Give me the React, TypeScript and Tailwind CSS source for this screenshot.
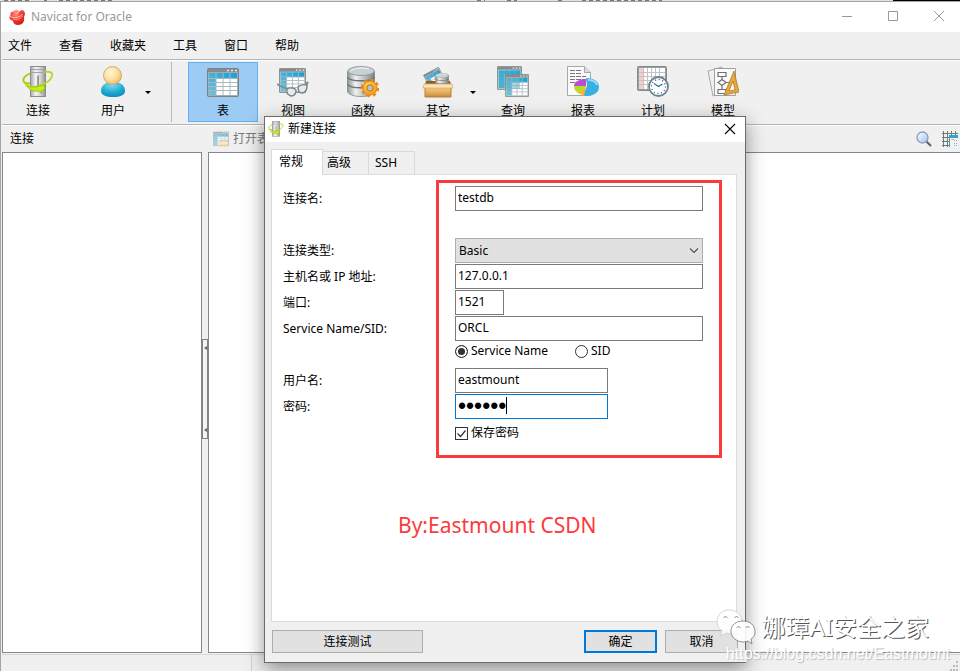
import React, { useState } from "react";
import type { ReactNode } from "react";

const Gradients = () => (
  <svg width="0" height="0" className="absolute" aria-hidden="true">
    <defs>
      <linearGradient id="metal" x1="0" x2="1" y1="0" y2="0">
        <stop offset="0" stopColor="#a5a5a5" />
        <stop offset=".35" stopColor="#f6f6f6" />
        <stop offset=".7" stopColor="#cfcfcf" />
        <stop offset="1" stopColor="#909090" />
      </linearGradient>
      <linearGradient id="drum" x1="0" x2="1" y1="0" y2="0">
        <stop offset="0" stopColor="#8f9799" />
        <stop offset=".3" stopColor="#eef2f2" />
        <stop offset=".65" stopColor="#b5bcbd" />
        <stop offset="1" stopColor="#7a8183" />
      </linearGradient>
      <linearGradient id="blue" x1="0" x2="1" y1="1" y2="0">
        <stop offset="0" stopColor="#6cc5dd" />
        <stop offset="1" stopColor="#129fd6" />
      </linearGradient>
      <radialGradient id="head" cx=".4" cy=".35" r=".7">
        <stop offset="0" stopColor="#fff6dc" />
        <stop offset=".6" stopColor="#fbdc9a" />
        <stop offset="1" stopColor="#eab45a" />
      </radialGradient>
      <radialGradient id="body" cx=".45" cy=".2" r=".9">
        <stop offset="0" stopColor="#7fdcf2" />
        <stop offset=".6" stopColor="#1aa6d0" />
        <stop offset="1" stopColor="#0b86b0" />
      </radialGradient>
      <linearGradient id="box" x1="0" x2="0" y1="0" y2="1">
        <stop offset="0" stopColor="#f9dfa9" />
        <stop offset=".6" stopColor="#e8b364" />
        <stop offset="1" stopColor="#c88a38" />
      </linearGradient>
      <radialGradient id="gear" cx=".4" cy=".35" r=".7">
        <stop offset="0" stopColor="#ffd94d" />
        <stop offset="1" stopColor="#f5951a" />
      </radialGradient>
      <radialGradient id="red" cx=".4" cy=".3" r=".8">
        <stop offset="0" stopColor="#ff8a7a" />
        <stop offset=".5" stopColor="#f3352a" />
        <stop offset="1" stopColor="#c01212" />
      </radialGradient>
      <linearGradient id="glass" x1="0" x2="1" y1="0" y2="1">
        <stop offset="0" stopColor="#ffffff" />
        <stop offset="1" stopColor="#9cc3f2" />
      </linearGradient>
    </defs>
  </svg>
);

const Logo = () => (
  <svg width="17" height="17" viewBox="0 0 17 17" aria-hidden="true">
    <path d="M1.500 6C1 3 3 2 5 3l3 2 3-3c2-1 5 0 5 3 0 1-1 2-1 3 1 5-2 8-6 8-3 0-5-2-5-4-2-1-4-2-3.500-4z" fill="url(#red)" />
    <path d="M4 2.500c2-2 5-2 6 0-1 2-3 2.500-5 1.500z" fill="#f88" />
    <path d="M11 2c2-1.500 4-1 4.500 1-1 1.500-3 1.500-4.500.5z" fill="#e9493e" />
    <path d="M1 7c2 3 9 2 13-2" stroke="#fff" strokeOpacity=".7" strokeWidth=".9" fill="none" />
    <path d="M4 10c3 1.500 7 0 10-3" stroke="#fff" strokeOpacity=".5" strokeWidth=".8" fill="none" />
  </svg>
);

const Server = ({ size = 32 }: { size?: number }) => (
  <svg width={size} height={size} viewBox="0 0 32 32" aria-hidden="true">
    <path d="M9 7C3 9 0 13 2 16c2 2 9 2 16 0" fill="none" stroke="#a5cc10" strokeWidth="1.800" />
    <rect x="8.500" y=".5" width="15" height="30" fill="url(#metal)" stroke="#8d8d8d" />
    <path d="M9 3.500h14M9 6.500h14" stroke="#a5a5a5" />
    <path d="M16 9.500v14" stroke="#555" />
    <path d="M23 6c6-1 8 1 7 4-1 4-7 8-14 10-6 2-11 1-13-3" fill="none" stroke="#b4dc18" strokeWidth="1.800" />
    <path d="M5 20c4 2 11 1 17-1l1 4-4 2 1 3-3-3c-5 1-10-1-12-5z" fill="#c4ee1a" stroke="#93b50c" strokeWidth=".7" />
  </svg>
);

const User = () => (
  <svg width="32" height="32" viewBox="0 0 32 32" aria-hidden="true">
    <path d="M4 25c0-6 5-9 12-9s12 3 12 9c0 4-5 6-12 6S4 29 4 25z" fill="url(#body)" />
    <circle cx="15.500" cy="9.500" r="9" fill="url(#head)" stroke="#c9a05a" strokeWidth=".8" />
  </svg>
);

const Grid = ({ x = 0, y = 0, w = 32, h = 29 }: { x?: number; y?: number; w?: number; h?: number }) => (
  <svg x={x} y={y} width={w} height={h} viewBox="0 0 32 29" preserveAspectRatio="none">
    <rect x=".5" y=".5" width="31" height="28" rx="1" fill="#a7adaf" stroke="#7d8385" />
    <path d="M1 1h30v3H1z" fill="#868c8e" />
    <path d="M20 2.500h2M24 2.500h2M28 2.500h2" stroke="#e9e9e9" strokeWidth="1.500" />
    <path d="M2 5h28v22H2z" fill="#fff" />
    <path d="M2 5h28v5.500H9V27H2z" fill="url(#blue)" />
    <path d="M2 10.500h28M2 14.500h28M2 18.500h28M2 22.500h28M9 5v22M16 5v22M23 5v22" stroke="#a9b9bd" strokeWidth="1" />
  </svg>
);

const TableIcon = () => (
  <svg width="32" height="32" viewBox="0 0 32 32" aria-hidden="true"><Grid y={2} /></svg>
);

const ViewIcon = () => (
  <svg width="32" height="32" viewBox="0 0 32 32" aria-hidden="true">
    <Grid x={2} y={2} w={27} h={25} />
    <path d="M0 18l3 2 8 3M31 16l-4 6" stroke="#858b8d" fill="none" strokeWidth="1.600" />
    <path d="M10 23c3-2 8-1 9 1 0 4-2 6-5 6-3-1-5-3-4-7zM21 21c2-2 6-3 9-2 0 5-2 8-5 8-3 0-4-2-4-6z" fill="#e3eced" stroke="#7d8385" strokeWidth="1.400" />
    <path d="M30 20l1-4-3 1" fill="none" stroke="#858b8d" />
  </svg>
);

const Drum = ({ x = 0, y = 0, w = 28, h = 31 }: { x?: number; y?: number; w?: number; h?: number }) => (
  <svg x={x} y={y} width={w} height={h} viewBox="0 0 28 31" preserveAspectRatio="none">
    <path d="M.5 5v20c0 3 6 5.500 13.500 5.500S27.500 28 27.500 25V5z" fill="url(#drum)" stroke="#7d8587" strokeWidth=".8" />
    <path d="M.5 11c2 5 25 5 27 0M.5 18c2 5 25 5 27 0" fill="none" stroke="#697173" strokeWidth="1.300" />
    <ellipse cx="14" cy="5" rx="13.300" ry="4.500" fill="#c9d0d1" stroke="#899193" strokeWidth=".8" />
    <path d="M4 5c3-3 12-4 18-2" stroke="#f4f6f6" fill="none" />
  </svg>
);

const FunctionIcon = () => (
  <svg width="32" height="32" viewBox="0 0 32 32" aria-hidden="true">
    <Drum />
    <circle cx="23" cy="22" r="7.800" fill="none" stroke="#ef8b12" strokeWidth="3" strokeDasharray="3.100 3.030" />
    <circle cx="23" cy="22" r="7" fill="url(#gear)" stroke="#ec8510" />
    <circle cx="23" cy="22" r="3.200" fill="#b5c2c6" stroke="#c76d0b" />
  </svg>
);

const OtherIcon = () => (
  <svg width="32" height="32" viewBox="0 0 32 32" aria-hidden="true">
    <g transform="rotate(-28 12 11)"><Grid x={3} y={4} w={18} h={18} /></g>
    <path d="M4 15h24l1 4H3z" fill="#8d5d22" />
    <Drum x={13} y={7} w={14} h={16} />
    <path d="M3 18h26v13H3z" fill="url(#box)" stroke="#b9803a" />
    <path d="M2 18h28l1 4H1z" fill="#fbe5b6" stroke="#cf9e55" strokeWidth=".6" />
  </svg>
);

const QueryIcon = () => (
  <svg width="32" height="32" viewBox="0 0 32 32" aria-hidden="true">
    <Grid w={25} h={24} />
    <path d="M2 5h21v17H2z" fill="#2fa9d4" fillOpacity=".6" />
    <Grid x={8} y={8} w={24} h={23} />
    <path d="M9 12h14v11H9z" fill="#6ab0ca" fillOpacity=".55" />
  </svg>
);

const ReportIcon = () => (
  <svg width="32" height="32" viewBox="0 0 32 32" aria-hidden="true">
    <path d="M.5.500h17l6 6v23H.5z" fill="#fafafa" stroke="#a7a7a7" />
    <path d="M17.500.500v6h6" fill="#ddd" stroke="#a7a7a7" />
    <path d="M3 4.500h12M3 7.500h11M3 10.500h16M3 13.500h15M3 16.500h8" stroke="#777" strokeDasharray="5 1" />
    <path d="M7 20c0-4 5-7 12-7v8H7z" fill="#bb4fd3" />
    <path d="M19 12c7 0 13 3 13 9s-6 9-13 9l-3-1 4-9z" fill="#38b0e6" />
    <path d="M7 20h12l-6 8c-4-2-6-4-6-8z" fill="#b8dc25" />
    <path d="M19 20l-2 10-5-3z" fill="#f6b72c" />
    <path d="M21 14c5 0 8 2 9 5" stroke="#9adcf7" strokeWidth="2" fill="none" />
  </svg>
);

const ScheduleIcon = () => (
  <svg width="32" height="32" viewBox="0 0 32 32" aria-hidden="true">
    <rect x=".5" y=".5" width="29" height="24" rx="1" fill="#999fa1" stroke="#848a8c" />
    <path d="M2 2h26v21H2z" fill="#fff" />
    <path d="M2 2h4v21H2z" fill="#f9cccc" />
    <path d="M6.500 2v21M10.500 2v21M14.500 2v21M18.500 2v21M22.500 2v21M2 6.500h26M2 10.500h26M2 14.500h26M2 18.500h26" stroke="#c2c2c2" />
    <circle cx="21.500" cy="20.500" r="9.500" fill="#fff" stroke="#6d8090" strokeWidth="1.800" />
    <circle cx="21.500" cy="20.500" r="7" fill="none" stroke="#2b4f75" strokeWidth="1.300" strokeDasharray="1 2.665" />
    <path d="M17 17.500l4.500 3 4-2.500" fill="none" stroke="#2676a0" strokeWidth="1.300" />
  </svg>
);

const ModelIcon = () => (
  <svg width="32" height="32" viewBox="0 0 32 32" aria-hidden="true">
    <path d="M1 5l14-4 5 25-14 4z" fill="#efefef" stroke="#aaa" />
    <path d="M7.500 2.500h21v27h-21z" fill="#fafafa" stroke="#a0a0a0" />
    <path d="M11 6.500h8v4h-8zM11 23.500h8v4h-8zM15 11v3M15 19v4M19 16.500h3M15 13.500l4 3-4 3-4-3z" fill="none" stroke="#707070" strokeWidth="1.200" />
    <path d="M27 5l5 21-15 3zM26 15l-4 10 6-1z" fill="#e6a93d" fillRule="evenodd" stroke="#a87018" strokeWidth=".7" />
  </svg>
);

const OpenTableIcon = () => (
  <svg width="16" height="16" viewBox="0 0 32 32" className="opacity-60" aria-hidden="true">
    <Grid y={1} />
    <path d="M14 19h16v11H14z" fill="#f5cf7f" stroke="#c3944a" />
    <path d="M14 24h16" stroke="#fff" strokeWidth="2" />
  </svg>
);

function Tool({ label, icon, active = false, arrow = false }: { label: string; icon: ReactNode; active?: boolean; arrow?: boolean }) {
  return (
    <button
      type="button"
      className={`relative flex h-15 shrink-0 flex-col items-center border pt-[3px] ${arrow ? "w-20" : "w-[70px]"} ${
        active ? "border-[#62b0f6] bg-[#9ccbf4]" : "border-transparent"
      }`}
    >
      {icon}
      <span className="mt-1 leading-[18px]">{label}</span>
      {arrow && <span className="absolute top-[28px] right-px border-x-3 border-t-3 border-x-transparent border-t-black" />}
    </button>
  );
}

const field = "h-[25px] border border-[#7a7a7a] bg-white px-0.5 pb-0.5 outline-none";

function Row({ id, label, children }: { id: string; label: string; children: ReactNode }) {
  return (
    <div className="flex h-[26px]">
      <label htmlFor={id} className="w-[172px] shrink-0 leading-[25px]">{label}</label>
      <div className="relative">{children}</div>
    </div>
  );
}

function Dialog() {
  const [mode, setMode] = useState("name");
  const tab = "border border-b-0 border-[#d9d9d9] text-left";
  const button = "h-[23px] border border-[#adadad] bg-[#e1e1e1]";
  return (
    <section
      aria-label="新建连接"
      className="absolute top-[116px] left-[264px] flex h-[547px] w-[482px] flex-col border border-[#6b6b6b] bg-[#f0f0f0] shadow-[0_6px_18px_rgba(0,0,0,0.42)]"
    >
      <header className="flex h-[25px] shrink-0 items-center bg-white pr-[9px] pb-px pl-[3px]">
        <Server size={16} />
        <h2 className="ml-1 flex-1">新建连接</h2>
        <button type="button" aria-label="关闭">
          <svg width="12" height="12" viewBox="0 0 12 12" aria-hidden="true">
            <path d="M1 1l10 10M11 1L1 11" stroke="#000" strokeWidth="1.100" />
          </svg>
        </button>
      </header>

      <div className="flex flex-1 flex-col px-1.5 pt-[7px]">
        <div role="tablist" className="relative z-10 flex items-end">
          <button type="button" role="tab" aria-selected="true" className={`${tab} -mb-px h-[26px] w-13 bg-white pb-0.5 pl-[7px]`}>常规</button>
          <button type="button" role="tab" aria-selected="false" className={`${tab} h-[23px] w-[46px] border-l-0 pl-1`}>高级</button>
          <button type="button" role="tab" aria-selected="false" className={`${tab} h-[23px] w-[46px] border-l-0 pl-1.5`}>SSH</button>
        </div>

        <div role="tabpanel" className="relative mr-0.5 h-[448px] border border-[#dcdcdc] bg-white pt-[11px] pl-[11px]">
          <Row id="conn" label="连接名:">
            <input id="conn" defaultValue="testdb" className={`${field} w-[248px]`} />
          </Row>
          <div className="h-[26px]" />
          <Row id="type" label="连接类型:">
            <select id="type" className="h-[25px] w-[248px] appearance-none border border-[#adadad] bg-[#e1e1e1] px-[3px] outline-none">
              <option>Basic</option>
            </select>
            <svg width="10" height="6" viewBox="0 0 10 6" className="pointer-events-none absolute top-[10px] right-1" aria-hidden="true">
              <path d="M1 .5l4 4 4-4" fill="none" stroke="#555" strokeWidth="1.200" />
            </svg>
          </Row>
          <Row id="host" label="主机名或 IP 地址:">
            <input id="host" defaultValue="127.0.0.1" className={`${field} w-[248px]`} />
          </Row>
          <Row id="port" label="端口:">
            <input id="port" defaultValue="1521" className={`${field} w-[49px]`} />
          </Row>
          <Row id="service" label="Service Name/SID:">
            <input id="service" defaultValue="ORCL" className={`${field} w-[248px]`} />
          </Row>
          <div className="flex h-[26px] gap-[27px] pb-2 pl-[172px]">
            {[["name", "Service Name"], ["sid", "SID"]].map(([value, text]) => (
              <label key={value} className="flex items-center gap-[3px]">
                <input
                  type="radio"
                  name="mode"
                  checked={mode === value}
                  onChange={() => setMode(value)}
                  className="size-[13px] appearance-none rounded-full border border-[#333] bg-white checked:bg-[#333] checked:shadow-[inset_0_0_0_2px_white]"
                />
                {text}
              </label>
            ))}
          </div>
          <Row id="user" label="用户名:">
            <input id="user" defaultValue="eastmount" className={`${field} w-[153px]`} />
          </Row>
          <Row id="password" label="密码:">
            <input id="password" type="password" defaultValue="orcl11" className="h-[25px] w-[153px] border border-[#0078d7] bg-white px-0.5 font-['Liberation_Sans',sans-serif] text-[23px] outline-none" />
            <span className="absolute top-[3px] left-[51px] h-[17px] w-px bg-black" />
          </Row>
          <label className="ml-[172px] flex h-[26px] w-fit items-center gap-[3px]">
            <span className="relative flex">
              <input type="checkbox" defaultChecked className="peer size-[13px] appearance-none border border-[#333] bg-white" />
              <svg width="13" height="13" viewBox="0 0 13 13" className="pointer-events-none absolute hidden peer-checked:block" aria-hidden="true">
                <path d="M2.500 6.500l3 3 5-6" fill="none" stroke="#333" strokeWidth="1.200" />
              </svg>
            </span>
            保存密码
          </label>
          <div className="pointer-events-none absolute top-[5px] left-[164px] h-[278px] w-[286px] border-3 border-[#fb3b3b]" />
          <p className="pointer-events-none absolute top-[335px] left-[126px] text-[21px] leading-[30px] whitespace-nowrap text-[#fb3b3b]">By:Eastmount CSDN</p>
        </div>

        <footer className="flex gap-2 pt-2 pr-px pl-px">
          <button type="button" className={`${button} w-[151px]`}>连接测试</button>
          <span className="flex-1" />
          <button type="button" className="h-[23px] w-[73px] border-2 border-[#0078d7] bg-[#e1e1e1]">确定</button>
          <button type="button" className={`${button} w-[73px]`}>取消</button>
        </footer>
      </div>
    </section>
  );
}

function Watermark() {
  return (
    <div className="pointer-events-none absolute right-2.5 bottom-2 text-right text-white">
      <div className="flex items-center justify-end gap-1.5 pr-[21px]">
        <svg width="40" height="36" viewBox="0 0 40 36" aria-hidden="true">
          <path d="M13 1C6 1 1 6 1 13c0 4 2 7 5 9l-1 5 5-3c9 2 16-3 16-11S20 1 13 1z" fill="#fff" fillOpacity=".9" stroke="#c4c4c4" strokeWidth=".7" />
          <path d="M27 12c-7 0-12 4-12 10s5 11 13 11l4-1 4 3-1-5c3-2 4-4 4-7 0-7-5-11-12-11z" fill="#fff" fillOpacity=".9" stroke="#777" strokeWidth=".8" />
          <path d="M8 9c0-2 3-2 3 0M19 9c0-2 3-2 3 0M21 19c0-2 3-2 3 0M30 19c0-2 3-2 3 0" fill="none" stroke="#888" />
        </svg>
        <span className="text-[24px] leading-9 [text-shadow:1px_1px_0_#555]">娜璋AI安全之家</span>
      </div>
      <div className="font-['Liberation_Sans',sans-serif] text-[16px] leading-[18px] [text-shadow:1px_1px_1px_#bbb]">https://blog.csdn.net/Eastmount</div>
    </div>
  );
}

export default function App() {
  return (
    <div className="relative flex h-screen flex-col overflow-hidden bg-[#f0f0f0] font-['Noto_Sans','Noto_Sans_CJK_SC',sans-serif] text-[12px] text-black">
      <Gradients />
      <div className="flex h-px shrink-0 bg-[#e3e3e3]">
        <svg width="664" height="1" viewBox="0 0 664 1" aria-hidden="true">
          <path d="M4 .5h28M44 .5h3M59 .5h53M477 .5h8M507 .5h10M558 .5h6M582 .5h80" stroke="#777" strokeDasharray="4 3" />
        </svg>
        <span className="ml-auto w-[67px] bg-black" />
      </div>
      <div className="flex min-h-0 flex-1 flex-col border-t border-l border-[#a3a3a3] pl-px">
        <header className="-ml-px flex h-[30px] shrink-0 items-center bg-white pl-2 text-[#999]">
          <Logo />
          <h1 className="ml-[5px] flex-1">Navicat for Oracle</h1>
          <div className="flex gap-[34px] pr-[15px]">
            <button type="button" aria-label="最小化">
              <svg width="12" height="12" viewBox="0 0 12 12" aria-hidden="true"><path d="M1 5.500h10" stroke="#999" /></svg>
            </button>
            <button type="button" aria-label="最大化">
              <svg width="12" height="12" viewBox="0 0 12 12" aria-hidden="true"><path d="M1.500.500h9v9h-9z" fill="none" stroke="#999" /></svg>
            </button>
            <button type="button" aria-label="关闭">
              <svg width="12" height="12" viewBox="0 0 12 12" aria-hidden="true"><path d="M1 0l10 10M11 0L1 10" stroke="#999" /></svg>
            </button>
          </div>
        </header>

        <nav className="flex h-7 shrink-0 gap-[27px] border-b border-[#b5b5b5] pl-1.5">
          {["文件", "查看", "收藏夹", "工具", "窗口", "帮助"].map((m) => (
            <button key={m} type="button">{m}</button>
          ))}
        </nav>

        <div className="flex h-[65px] shrink-0 border-t border-b border-t-white border-b-[#b5b5b5] pt-px pl-px">
          <Tool label="连接" icon={<Server />} />
          <Tool label="用户" icon={<User />} arrow />
          <div className="mr-4 ml-[18px] h-15 w-px bg-[#b9b9b9]" />
          <Tool label="表" icon={<TableIcon />} active />
          <Tool label="视图" icon={<ViewIcon />} />
          <Tool label="函数" icon={<FunctionIcon />} />
          <Tool label="其它" icon={<OtherIcon />} arrow />
          <Tool label="查询" icon={<QueryIcon />} />
          <Tool label="报表" icon={<ReportIcon />} />
          <Tool label="计划" icon={<ScheduleIcon />} />
          <Tool label="模型" icon={<ModelIcon />} />
        </div>

        <div className="flex h-[27px] shrink-0 items-center border-t border-white">
          <h2 className="w-[211px] pl-2">连接</h2>
          <button type="button" className="flex items-center gap-1 text-[#777]">
            <OpenTableIcon />
            打开表
          </button>
          <span className="flex-1" />
          <button type="button" aria-label="搜索" className="mr-2.5">
            <svg width="16" height="16" viewBox="0 0 16 16" aria-hidden="true">
              <path d="M10.500 10.500l4.500 4.500" stroke="#5e6470" strokeWidth="2.200" />
              <circle cx="6.500" cy="6.500" r="5.500" fill="url(#glass)" stroke="#8c9bb5" strokeWidth="1.300" />
            </svg>
          </button>
          <button type="button" aria-label="网格" className="mr-0.5">
            <svg width="16" height="16" viewBox="0 0 16 16" aria-hidden="true">
              <path d="M0 2.500h16M0 6.500h16M0 10.500h7M0 14.500h7M1.500 0v16M5.500 0v16M9.500 0v5M13.500 0v5" stroke="#777" />
              <path d="M7 4h9v12H7z" fill="#f2f2f2" />
              <path d="M7 4h9v3H7z" fill="#27a7d6" />
              <path d="M7.500 6v10" stroke="#27a7d6" />
              <path d="M9 8.500h3" stroke="#f0b92a" />
              <path d="M12 9.500h3M12 12.500h3M12 14.500h3" stroke="#aaa" strokeDasharray="1 1" />
            </svg>
          </button>
        </div>

        <main className="flex min-h-0 flex-1">
          <div className="w-[200px] shrink-0 border border-[#828790] bg-white" />
          <div className="flex w-1.5 shrink-0 items-center justify-center">
            <div className="-mt-7 flex h-[100px] w-1.5 shrink-0 flex-col items-center justify-between border border-[#828282] bg-[#f4f4f4] py-1.5">
              <span className="border-y-2 border-r-3 border-y-transparent border-r-[#666]" />
              <span className="border-y-2 border-r-3 border-y-transparent border-r-[#666]" />
            </div>
          </div>
          <div className="flex-1 border border-r-0 border-[#828790] bg-white" />
        </main>

        <footer className="mt-px flex h-[17px] shrink-0 items-end border-t border-[#d7d7d7]">
          <span className="ml-[249px] h-4 w-px bg-[#d0d0d0]" />
          <svg width="10" height="10" viewBox="0 0 10 10" className="ml-auto" aria-hidden="true">
            <path d="M6 0h2v2H6zM6 4h2v2H6zM3 4h2v2H3zM6 8h2v2H6zM3 8h2v2H3zM0 8h2v2H0z" fill="#b9b9b9" />
          </svg>
        </footer>
      </div>
      <Dialog />
      <Watermark />
    </div>
  );
}
